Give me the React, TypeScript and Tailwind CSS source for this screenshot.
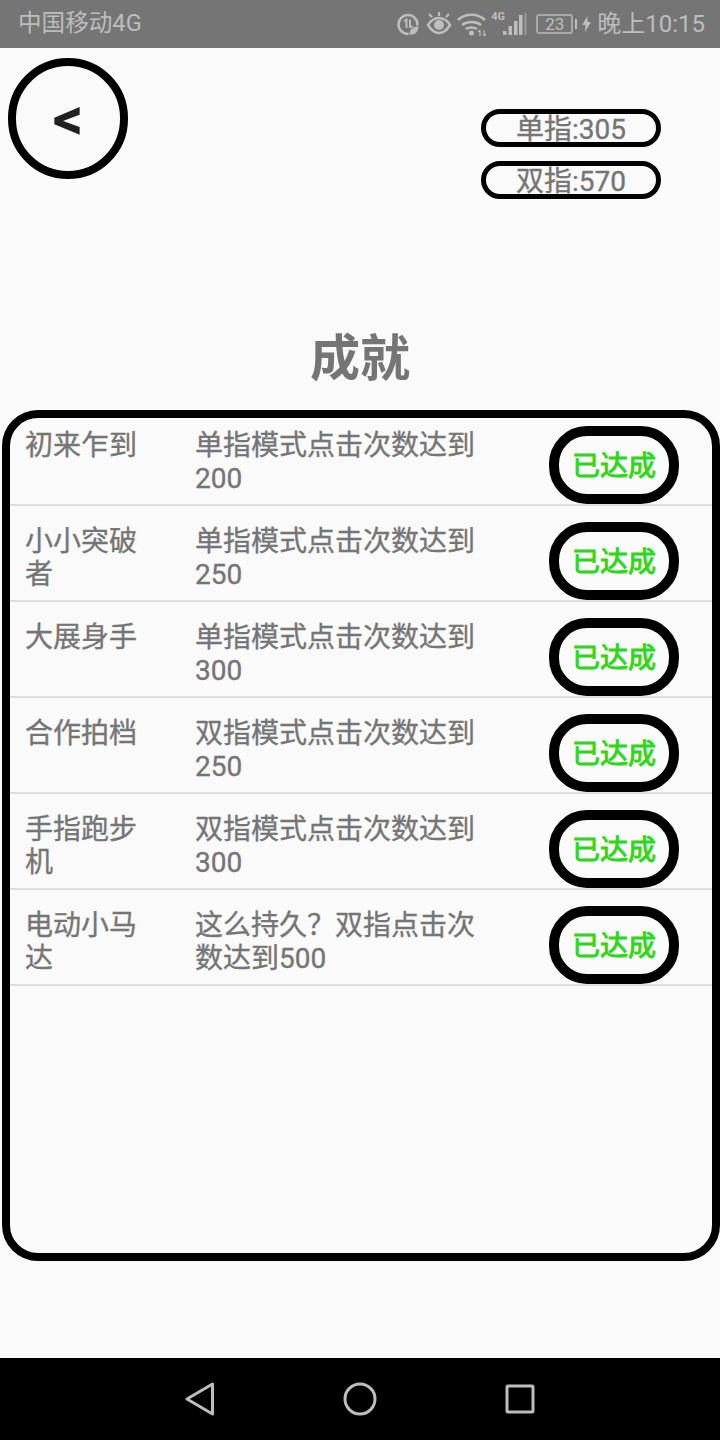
import React from 'react';

const FONT = "font-['Roboto','Noto_Sans_CJK_SC',sans-serif]";

const ROWS = [
  { name: '初来乍到', desc: '单指模式点击次数达到200' },
  { name: '小小突破者', desc: '单指模式点击次数达到250' },
  { name: '大展身手', desc: '单指模式点击次数达到300' },
  { name: '合作拍档', desc: '双指模式点击次数达到250' },
  { name: '手指跑步机', desc: '双指模式点击次数达到300' },
  { name: '电动小马达', desc: '这么持久？双指点击次数达到500' },
];

const StatusIcons = () => (
  <svg width="140" height="28" viewBox="0 0 140 28" fill="none" stroke="#bdbdbd" className="shrink-0">
    {/* power saver */}
    <circle cx="11" cy="14.5" r="9.5" strokeWidth="2.5" />
    <path d="M7 11l2.5-1.5V18M13 9.5V17h3.5" strokeWidth="2" />
    <path d="M12 25c0-6 4-9 10-9 0 6-4 10-10 9z" fill="#bdbdbd" stroke="#757575" strokeWidth="1" />
    {/* eye comfort */}
    <path d="M31 15c3-5 7-7 11-7s8 2 11 7c-3 5-7 8-11 8s-8-3-11-8z" strokeWidth="2.5" />
    <circle cx="42" cy="15" r="5" fill="#bdbdbd" stroke="none" />
    <path d="M35 7l-3-3M42 6V2M49 7l3-3" strokeWidth="2.2" />
    {/* wifi */}
    <path d="M61 10c7-7 20-7 27 0M65 15c5-4 14-4 19 0M69 19c3-2 8-2 11 0" strokeWidth="2.5" />
    <circle cx="74.5" cy="23" r="2.5" fill="#bdbdbd" stroke="none" />
    <path d="M83 20v6M81 22l2-2M87 20v6M89 24l-2 2" strokeWidth="1.2" />
    {/* signal */}
    <g fill="#bdbdbd" stroke="none">
      <rect x="106" y="21" width="3.5" height="4" />
      <rect x="111.5" y="16" width="3.5" height="9" />
      <rect x="117" y="11" width="3.5" height="14" />
      <rect x="122" y="5" width="3.5" height="20" />
    </g>
    <rect x="127.5" y="3" width="2" height="22" fill="#9a9a9a" stroke="none" />
  </svg>
);

export default function App() {
  return (
    <div className={`${FONT} w-[720px] h-[1440px] flex flex-col bg-[#fafafa] text-[#757575] overflow-hidden`}>
      {/* status bar */}
      <div className="h-12 shrink-0 bg-[#757575] text-[#bdbdbd] flex items-center pl-[18px] pr-[15px] text-[23.6px]">
        <span>中国移动4G</span>
        <div className="ml-auto flex items-center text-2xl">
          <div className="relative">
            <StatusIcons />
            <span className="absolute left-[94px] top-[1px] text-[11px] leading-[12px] font-bold">4G</span>
          </div>
          <div className="ml-[-1px] w-[37px] h-[20px] border-2 border-[#a8a8a8] rounded-[3px] flex items-center justify-center text-[17px] leading-none">23</div>
          <div className="w-[2px] h-[10px] bg-[#bdbdbd] ml-[2px]" />
          <svg width="9" height="16" viewBox="0 0 9 16" className="ml-[5px]"><path d="M5.5 0L0 9h3.5L3 16l6-10H5.5z" fill="#bdbdbd" /></svg>
          <span className="ml-[6px]">晚上10:15</span>
        </div>
      </div>

      <div className="flex-1 min-h-0 flex flex-col">
        {/* top row */}
        <div className="flex justify-between pl-2 pr-[59px] pt-[10px]">
          <div className="w-[120px] h-[121px] rounded-full border-[8px] border-black flex items-center justify-center">
            <span className="text-[60px] leading-none font-bold text-[#212121]">&lt;</span>
          </div>
          <div className="flex flex-col gap-[14px] pt-[51px]">
            <Pill text="单指:305" />
            <Pill text="双指:570" />
          </div>
        </div>

        <h1 className="mt-[128px] text-center text-[50px] leading-[64px] font-bold">成就</h1>

        {/* achievements */}
        <div className="mt-[19px] ml-[2px] h-[851px] border-[8px] border-black rounded-[36px] overflow-hidden">
          <div className="-mt-[8px]">
            {ROWS.map(r => (
              <div key={r.name} className="h-24 border-b-2 border-[#dddddd] flex text-[28px] leading-[33px] [-webkit-text-stroke:0.35px_#757575]">
                <div className="w-[112px] ml-[15px] pt-[19px] break-all">{r.name}</div>
                <div className="w-[284px] ml-[58px] pt-[19px]">{r.desc}</div>
                <div className="ml-[70px] w-[130px] h-[78px] mt-[16px] rounded-[38px] border-[10px] border-black flex items-center justify-center text-[#2fd61a] [-webkit-text-stroke:0.9px_#2fd61a] shrink-0 pt-[3px]">
                  已达成
                </div>
              </div>
            ))}
          </div>
        </div>
      </div>

      {/* nav bar */}
      <div className="h-[82px] shrink-0 bg-black flex items-center justify-center gap-[128px]">
        <svg width="30" height="34" viewBox="0 0 30 34" fill="none" stroke="#bdbdbd" strokeWidth="3" strokeLinejoin="round"><path d="M27.5 2v30L2 17z" /></svg>
        <svg width="34" height="34" viewBox="0 0 34 34" fill="none" stroke="#bdbdbd" strokeWidth="3"><circle cx="17" cy="17" r="15" /></svg>
        <svg width="30" height="30" viewBox="0 0 30 30" fill="none" stroke="#bdbdbd" strokeWidth="3" strokeLinejoin="round"><rect x="2" y="2" width="26" height="26" rx="1" /></svg>
      </div>
    </div>
  );
}

const Pill = ({ text }: { text: string }) => (
  <div className="w-[180px] h-[38px] rounded-full border-[5px] border-black flex items-center justify-center text-[28px] leading-none pt-[3px] [-webkit-text-stroke:0.35px_#757575]">
    {text}
  </div>
);
